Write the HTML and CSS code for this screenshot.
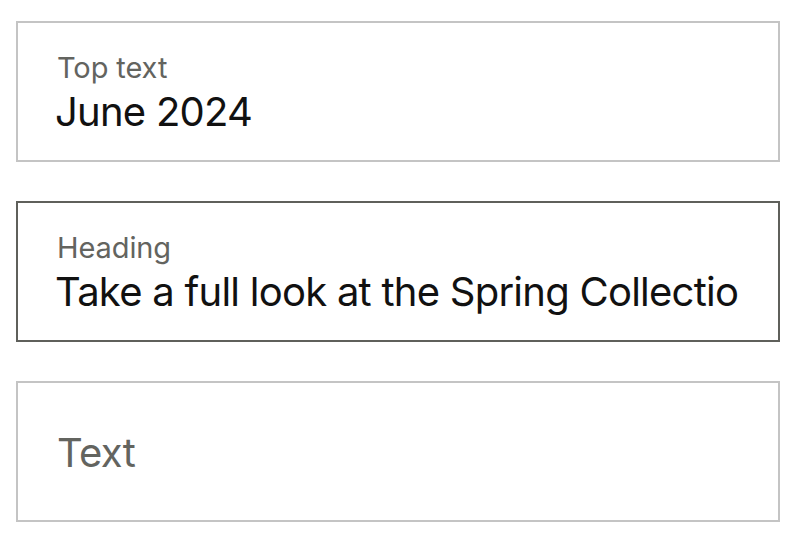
FILE: index.html
```html
<!DOCTYPE html>
<html>
<head>
<meta charset="utf-8">
<link rel="stylesheet" href="styles.css">
</head>
<body>
<div class="fields">
  <div class="field">
    <div class="label">Top text</div>
    <div class="value">June 2024</div>
  </div>
  <div class="field field-focus">
    <div class="label">Heading</div>
    <div class="value">Take a full look at the Spring Collection</div>
  </div>
  <div class="field field-empty">
    <div class="placeholder">Text</div>
  </div>
</div>
</body>
</html>
```
FILE: styles.css
```css
html, body {
  margin: 0;
  padding: 0;
  background: #ffffff;
}
body {
  font-family: Inter, "Liberation Sans", sans-serif;
}
.fields {
  display: flex;
  flex-direction: column;
  gap: 39px;
  padding: 21px 20px 0 16px;
}
.field {
  box-sizing: border-box;
  height: 141px;
  border: 2px solid #c4c4c4;
  padding: 30px 40px 0 37px;
  overflow: hidden;
}
.field-focus {
  border-color: #5f605b;
}
.field-empty {
  padding-top: 46px;
}
.label {
  font-size: 29px;
  line-height: 29px;
  letter-spacing: -0.1px;
  color: #63645f;
  padding-left: 2px;
  margin-bottom: 6px;
}
.value {
  font-size: 40px;
  line-height: 48px;
  letter-spacing: -0.75px;
  color: #111111;
  white-space: nowrap;
  overflow: hidden;
}
.placeholder {
  font-size: 40px;
  line-height: 48px;
  letter-spacing: -0.7px;
  color: #63645f;
  padding-left: 2px;
}
```
